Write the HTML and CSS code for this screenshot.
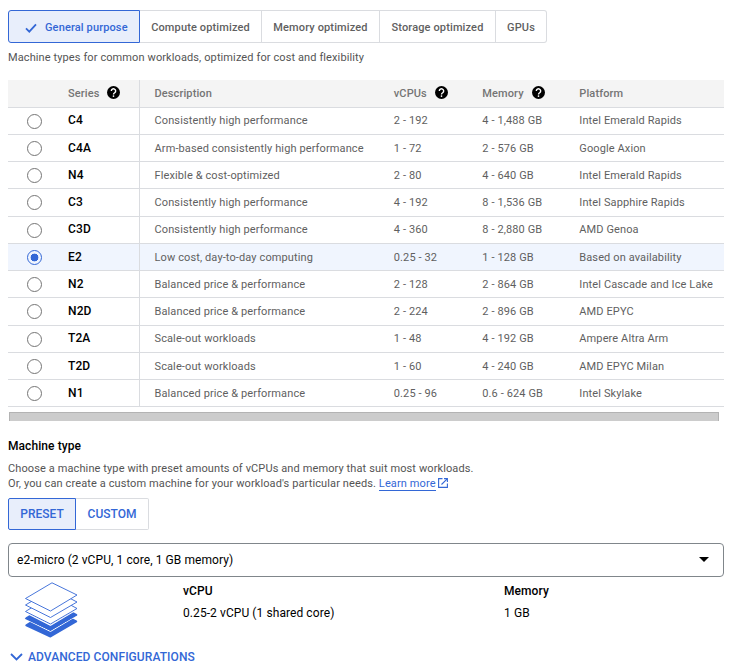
FILE: index.html
```html
<!DOCTYPE html>
<html lang="en">
<head>
<meta charset="utf-8">
<title>Machine configuration</title>
<link rel="stylesheet" href="styles.css">
</head>
<body>
<svg width="0" height="0" class="defs">
  <symbol id="help" viewBox="0 0 24 24"><path d="M12 0a12 12 0 1 0 0 24a12 12 0 1 0 0-24z" fill="#000"/><path d="M8 9.2a4 4 0 1 1 6.3 3.2c-1.500 1-2.300 1.500-2.300 3.300" fill="none" stroke="#fff" stroke-width="2.600"/><circle cx="12" cy="18.600" r="1.600" fill="#fff"/></symbol>
</svg>
<main>
  <div class="tabs">
    <button class="tab active general"><svg width="12" height="10" viewBox="0 0 12 10"><path d="M1 5.300L4.300 8.600L11 1.300" fill="none" stroke="#3367d6" stroke-width="1.800"/></svg><span>General purpose</span></button>
    <button class="tab compute">Compute optimized</button>
    <button class="tab memory">Memory optimized</button>
    <button class="tab storage">Storage optimized</button>
    <button class="tab gpus">GPUs</button>
  </div>
  <p class="hint">Machine types for common workloads, optimized for cost and flexibility</p>
  <div class="table">
    <div class="row head"><span></span><span class="series">Series<svg class="help"><use href="#help"/></svg></span><span>Description</span><span>vCPUs<svg class="help"><use href="#help"/></svg></span><span>Memory<svg class="help"><use href="#help"/></svg></span><span>Platform</span></div>
    <div class="row first"><i class="radio"></i><b class="series">C4</b><span>Consistently high performance</span><span>2 - 192</span><span>4 - 1,488 GB</span><span>Intel Emerald Rapids</span></div>
    <div class="row"><i class="radio"></i><b class="series">C4A</b><span>Arm-based consistently high performance</span><span>1 - 72</span><span>2 - 576 GB</span><span>Google Axion</span></div>
    <div class="row"><i class="radio"></i><b class="series">N4</b><span>Flexible &amp; cost-optimized</span><span>2 - 80</span><span>4 - 640 GB</span><span>Intel Emerald Rapids</span></div>
    <div class="row"><i class="radio"></i><b class="series">C3</b><span>Consistently high performance</span><span>4 - 192</span><span>8 - 1,536 GB</span><span>Intel Sapphire Rapids</span></div>
    <div class="row"><i class="radio"></i><b class="series">C3D</b><span>Consistently high performance</span><span>4 - 360</span><span>8 - 2,880 GB</span><span>AMD Genoa</span></div>
    <div class="row selected"><i class="radio"></i><b class="series">E2</b><span>Low cost, day-to-day computing</span><span>0.25 - 32</span><span>1 - 128 GB</span><span>Based on availability</span></div>
    <div class="row"><i class="radio"></i><b class="series">N2</b><span>Balanced price &amp; performance</span><span>2 - 128</span><span>2 - 864 GB</span><span>Intel Cascade and Ice Lake</span></div>
    <div class="row"><i class="radio"></i><b class="series">N2D</b><span>Balanced price &amp; performance</span><span>2 - 224</span><span>2 - 896 GB</span><span>AMD EPYC</span></div>
    <div class="row"><i class="radio"></i><b class="series">T2A</b><span>Scale-out workloads</span><span>1 - 48</span><span>4 - 192 GB</span><span>Ampere Altra Arm</span></div>
    <div class="row"><i class="radio"></i><b class="series">T2D</b><span>Scale-out workloads</span><span>1 - 60</span><span>4 - 240 GB</span><span>AMD EPYC Milan</span></div>
    <div class="row"><i class="radio"></i><b class="series">N1</b><span>Balanced price &amp; performance</span><span>0.25 - 96</span><span>0.6 - 624 GB</span><span>Intel Skylake</span></div>
  </div>
  <div class="scrollbar"></div>
  <h2>Machine type</h2>
  <p class="intro">Choose a machine type with preset amounts of vCPUs and memory that suit most workloads.<br>Or, you can create a custom machine for your workload's particular needs. <a>Learn more</a><svg class="ext" width="10" height="10" viewBox="0 0 10 10"><path d="M4.500.6H.6V9.400H9.400V5.500M6 .6H9.400V4M9.200.8L3.500 6.500" fill="none" stroke="#3367d6" stroke-width="1.100"/></svg></p>
  <div class="modes"><button class="mode active">PRESET</button><button class="mode custom">CUSTOM</button></div>
  <div class="select"><span>e2-micro (2 vCPU, 1 core, 1 GB memory)</span><svg width="10" height="5" viewBox="0 0 10 5"><path d="M0 0H10L5 5z"/></svg></div>
  <div class="specs">
    <svg class="stack" width="54" height="57" viewBox="0 0 54 57" stroke="#3367d6" stroke-linejoin="round">
      <path fill="#3367d6" stroke-width="2" d="M2.300 43.300L28 27L52.200 39.500L26.500 54.500z"/>
      <path fill="#3367d6" stroke="#fff" d="M0 36.500L28 19L54 33L26.500 49.500z"/>
      <path fill="#3367d6" stroke-width="2" d="M2.300 36.300L28 20L52.200 33L26.500 47.500z"/>
      <g fill="#fff" stroke-width=".9"><path stroke="#fff" d="M0 30L28 13L54 27L26.500 43.500z"/><path d="M1.500 29.500L28 13L53 26.500L26.500 42z"/><path d="M1.500 23L28 7L53 20L26.500 35.500z"/><path d="M1.500 16.500L28 .8L53 13L26.500 29z"/></g>
    </svg>
    <div class="spec"><strong>vCPU</strong><span>0.25-2 vCPU (1 shared core)</span></div>
    <div class="spec"><strong>Memory</strong><span>1 GB</span></div>
  </div>
  <div class="advanced"><svg width="13" height="8" viewBox="0 0 13 8"><path d="M1 1L6.500 6.500L12 1" fill="none" stroke="#3367d6" stroke-width="1.800"/></svg>ADVANCED CONFIGURATIONS</div>
</main>
</body>
</html>
```
FILE: styles.css
```css
* { box-sizing: border-box; }
body { margin: 0; background: #fff; color: #000; font-family: Roboto, sans-serif; font-size: 12px; letter-spacing: .08px; }
main { padding: 10px 8px 0; }
.defs { display: block; }
button { font: inherit; background: none; }
p, h2 { margin: 0; }
.tabs { display: flex; height: 33px; }
.tab { border: 1px solid #dadce0; border-left: 0; padding: 0; font-size: 11px; font-weight: 500; letter-spacing: .13px; color: #5f5f5f; white-space: nowrap; }
.tab.active { border: 1px solid #3367d6; background: #e8eefb; color: #3367d6; border-radius: 3px 0 0 3px; display: flex; align-items: center; gap: 8px; padding: 2px 0 0 16px; }
.active span { margin-top: -1px; }
.general { width: 132px; }
.compute { width: 122px; }
.memory { width: 118px; }
.storage { width: 116px; }
.gpus { width: 51px; border-radius: 0 3px 3px 0; }
.tab:not(.active) { padding-top: 1px; }
.hint { margin-top: 7px; height: 16px; line-height: 16px; font-size: 11px; letter-spacing: .105px; color: #545454; }
.table { margin-top: 14px; font-size: 11px; letter-spacing: .115px; color: #5f5f5f; }
.row { display: grid; grid-template-columns: 60px 86.5px 239.300px 88.500px 97px 1fr; height: 27.22px; line-height: 27px; border-bottom: 1px solid #dadce0; white-space: nowrap; }
.row > span { margin-top: -.2px; }
.row > .series { position: relative; margin-top: -.2px; color: #000; font-size: 12px; font-weight: 500; line-height: 26px; }
.first > span, .first > .series { margin-top: -.5px; }
.series::after { content: ""; position: absolute; left: 71px; top: 0; bottom: 0; width: 1px; background: #dadce0; }
.head { height: 27.79px; line-height: 27px; background: #f4f4f4; font-weight: 500; color: #757575; }
.head > .series { color: #757575; font-size: 11px; line-height: 27px; }
.help { width: 13px; height: 13px; margin-left: 8px; vertical-align: -2px; }
.series .help { margin-left: 7px; }
.selected { background: #f0f5fe; }
.radio { width: 15px; height: 15px; margin: 6px 0 0 19px; border: 1px solid #757575; border-radius: 50%; }
.selected .radio { border: 1.5px solid #3367d6; background: radial-gradient(circle, #3367d6 3.600px, transparent 4.200px); }
.scrollbar { width: 710px; height: 9px; margin: 4.800px 0 0 1px; background: #ccc; border: 1px solid #b3b3b3; border-bottom: 0; }
h2 { margin-top: 17px; font-size: 12px; font-weight: 500; line-height: 16px; }
.intro { margin-top: 7px; font-size: 11px; line-height: 15px; letter-spacing: .11px; color: #545454; }
.intro a { color: #3367d6; border-bottom: 1px solid #3367d6; }
.ext { margin-left: 2px; vertical-align: -1px; }
.modes { display: flex; height: 32px; margin-top: 7px; }
.mode { width: 68px; border: 1px solid #3367d6; padding: 0; color: #3367d6; font-size: 12px; font-weight: 500; border-radius: 2px 0 0 2px; }
.mode.active { background: #e8eefb; }
.custom { width: 73px; border-color: #dadce0; border-left: 0; border-radius: 0 2px 2px 0; }
.select { display: flex; justify-content: space-between; align-items: center; height: 34px; margin-top: 13px; padding: 0 14px 0 8px; border: 1px solid #80868b; border-radius: 4px; }
.specs { display: grid; grid-template-columns: 175px 321px 1fr; height: 68px; padding-top: 5px; }
.stack { margin-left: 16px; }
.spec { display: flex; flex-direction: column; gap: 6px; line-height: 16px; padding-top: 1px; }
.spec strong { font-weight: 500; }
.advanced { display: flex; align-items: center; gap: 5px; height: 24px; padding-left: 2px; color: #3367d6; font-weight: 500; }
```
